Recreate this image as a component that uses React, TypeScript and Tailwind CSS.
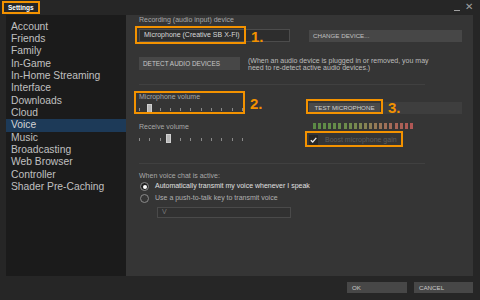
import React from "react";

const sections = [
  "Account",
  "Friends",
  "Family",
  "In-Game",
  "In-Home Streaming",
  "Interface",
  "Downloads",
  "Cloud",
  "Voice",
  "Music",
  "Broadcasting",
  "Web Browser",
  "Controller",
  "Shader Pre-Caching",
];

const meterColors = [
  "#5b8a45", "#5e8b46", "#608c47", "#628c48", "#658c49", "#688c4a", "#6c8b4b", "#718a4d",
  "#78884f", "#808651", "#878253", "#8e7e55", "#957a56", "#9b7557", "#a07058", "#a46b58",
  "#a86658", "#ab6157", "#ae5c56", "#b05755",
];

function Slider({ thumb }: { thumb: number }) {
  return (
    <div className="relative w-[104px] h-[10px] flex items-center justify-between">
      {Array.from({ length: 11 }).map((_, i) => (
        <span key={i} className="w-[1px] h-[3px] bg-[#8a8a8a]" />
      ))}
      <span
        className="absolute top-0 w-[5px] h-[9px] bg-[#b8b8b8] border border-[#d0d0d0]"
        style={{ left: thumb }}
      />
    </div>
  );
}

function OrangeBox({ className }: { className: string }) {
  return <div className={`absolute border-2 border-[#f39200] pointer-events-none ${className}`} />;
}

function Num({ className, n }: { className: string; n: string }) {
  return (
    <span className={`absolute text-[15px] font-bold leading-none text-[#f39200] ${className}`}>{n}</span>
  );
}

export default function App() {
  return (
    <div
      className="relative w-[480px] h-[300px] bg-[#262626] flex flex-col text-[#c9c9c9] overflow-hidden"
      style={{ fontFamily: '"Liberation Sans", Arial, sans-serif' }}
    >
      {/* title bar */}
      <div className="h-[15px] flex items-start justify-between">
        <div className="ml-[2px] mt-[1px] h-[13px] px-[4px] border-2 border-[#f39200] flex items-center text-[6.5px] font-bold text-white">
          Settings
        </div>
        <div className="flex items-center gap-[5px] mr-[7px] mt-[2px] text-[#a0a0a0]">
          <span className="w-[6px] h-[1px] bg-[#a0a0a0] mt-[6px]" />
          <span className="text-[10px] leading-none">✕</span>
        </div>
      </div>

      {/* body */}
      <div className="flex ml-[6px] w-[467px] h-[261px]">
        <div className="w-[120px] bg-[#1b1b1b] pt-[5.5px]">
          {sections.map((s) => (
            <div
              key={s}
              className={`h-[12.35px] flex items-center pl-[5px] text-[10.3px] leading-none ${
                s === "Voice" ? "bg-[#1d3a58] text-[#d4d4d4]" : "text-[#c0c0c0]"
              }`}
            >
              {s}
            </div>
          ))}
        </div>

        <div className="flex-1 bg-[#353535] pl-[13px] pt-[1px] text-[7px]">
          <div className="h-[8px] leading-[8px] text-[#a8a8a8]">Recording (audio input) device</div>

          <div className="mt-[5px] flex items-center">
            <div className="w-[151px] h-[13px] border border-[#4c4c4c] bg-[#2d2d2d] pl-[4px] flex items-center text-[#d8d8d8]">
              Microphone (Creative SB X-FI)
            </div>
            <div className="ml-[19px] w-[153px] h-[12px] bg-[#474747] pl-[4px] flex items-center text-[6.2px] text-[#c0c0c0]">
              CHANGE DEVICE...
            </div>
          </div>

          <div className="mt-[15px] flex items-start">
            <div className="w-[101px] h-[13px] bg-[#474747] pl-[4px] flex items-center text-[6.4px] text-[#c8c8c8]">
              DETECT AUDIO DEVICES
            </div>
            <div className="ml-[8px] text-[7px] leading-[7px] text-[#bdbdbd]">
              <div>(When an audio device is plugged in or removed, you may</div>
              <div>need to re-detect active audio devices.)</div>
            </div>
          </div>

          <div className="mt-[13px] w-[286px] h-[1px] bg-[#404040]" />

          <div className="mt-[8px] flex items-start">
            <div className="w-[170px]">
              <div className="h-[8px] leading-[8px] text-[#a8a8a8]">Microphone volume</div>
              <div className="mt-[3px]">
                <Slider thumb={8} />
              </div>
              <div className="mt-[9px] h-[8px] leading-[8px] text-[#a8a8a8]">Receive volume</div>
              <div className="mt-[3px]">
                <Slider thumb={27} />
              </div>
            </div>
            <div className="mt-[9px]">
              <div className="flex items-center">
                <div className="w-[71px] h-[11px] bg-[#4a4a4a] flex items-center justify-center text-[6.2px] text-[#d0d0d0]">
                  TEST MICROPHONE
                </div>
                <div className="ml-[3px] w-[79px] h-[12px] bg-[#3e3e3e]" />
              </div>
              <div className="mt-[9px] ml-[4px] flex gap-[2.1px]">
                {meterColors.map((c, i) => (
                  <span key={i} className="w-[3px] h-[6px]" style={{ backgroundColor: c }} />
                ))}
              </div>
              <div className="mt-[6px] flex items-center">
                <span className="w-[9px] h-[10px] bg-[#262626] flex items-center justify-center">
                  <svg width="7" height="6" viewBox="0 0 7 6">
                    <path d="M0.8 3.2 L2.7 5 L6.3 0.9" stroke="#e8e8e8" strokeWidth="1.3" fill="none" />
                  </svg>
                </span>
                <span className="ml-[7px] text-[#5e5e5e]">Boost microphone gain</span>
              </div>
            </div>
          </div>

          <div className="mt-[17px] w-[286px] h-[1px] bg-[#404040]" />

          <div className="mt-[8px] h-[8px] leading-[8px] text-[#a8a8a8]">When voice chat is active:</div>

          <div className="mt-[2px] flex items-center h-[10px]">
            <span className="ml-[1px] w-[9px] h-[9px] rounded-full border border-[#8a8a8a] bg-[#222] flex items-center justify-center">
              <span className="w-[4px] h-[4px] rounded-full bg-white" />
            </span>
            <span className="ml-[6px] text-[#e0e0e0]">Automatically transmit my voice whenever I speak</span>
          </div>
          <div className="mt-[2px] flex items-center h-[10px]">
            <span className="ml-[1px] w-[9px] h-[9px] rounded-full border border-[#8a8a8a]" />
            <span className="ml-[6px] text-[#b0b0b0]">Use a push-to-talk key to transmit voice</span>
          </div>
          <div className="mt-[3px] ml-[18px] w-[134px] h-[11px] border border-[#4a4a4a] bg-[#313131] pl-[4px] flex items-center text-[#777]">
            V
          </div>
        </div>
      </div>

      {/* bottom buttons */}
      <div className="flex justify-end gap-[7px] mr-[7px] mt-[6px]">
        <div className="w-[60px] h-[11px] bg-[#474747] pl-[5px] flex items-center text-[6.2px] text-[#c8c8c8]">OK</div>
        <div className="w-[59px] h-[11px] bg-[#474747] pl-[5px] flex items-center text-[6.2px] text-[#c8c8c8]">CANCEL</div>
      </div>

      {/* annotations */}
      <OrangeBox className="left-[135px] top-[26px] w-[111px] h-[18px]" />
      <Num className="left-[251px] top-[29px]" n="1." />
      <OrangeBox className="left-[134px] top-[91px] w-[111px] h-[23px]" />
      <Num className="left-[250px] top-[96px]" n="2." />
      <OrangeBox className="left-[306px] top-[99px] w-[77px] h-[15px]" />
      <Num className="left-[388px] top-[100px]" n="3." />
      <OrangeBox className="left-[305px] top-[131px] w-[98px] h-[16px]" />
    </div>
  );
}
